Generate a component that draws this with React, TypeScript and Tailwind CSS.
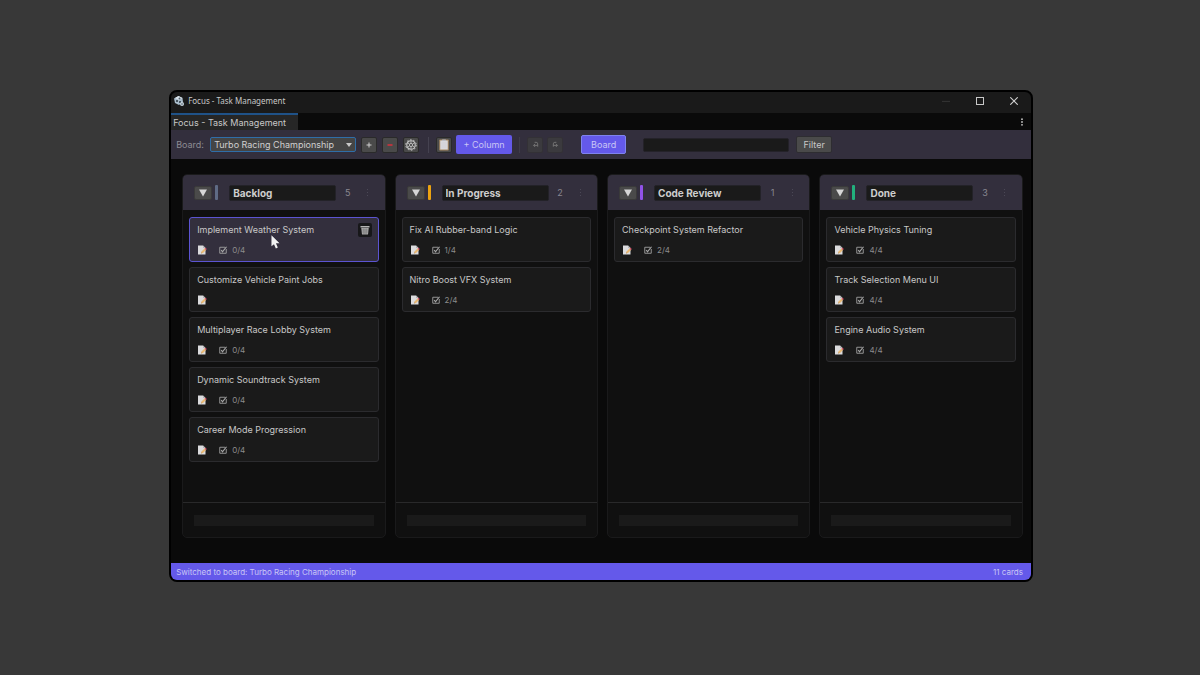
import React, { useState } from "react";

type Card = { id: number; title: string; checklist?: string };

type Column = {
  id: string;
  name: string;
  accent: string;
  cards: Card[];
};

const columns: Column[] = [
  {
    id: "backlog",
    name: "Backlog",
    accent: "bg-[#5f6b85]",
    cards: [
      { id: 1, title: "Implement Weather System", checklist: "0/4" },
      { id: 2, title: "Customize Vehicle Paint Jobs" },
      { id: 3, title: "Multiplayer Race Lobby System", checklist: "0/4" },
      { id: 4, title: "Dynamic Soundtrack System", checklist: "0/4" },
      { id: 5, title: "Career Mode Progression", checklist: "0/4" },
    ],
  },
  {
    id: "progress",
    name: "In Progress",
    accent: "bg-[#eba310]",
    cards: [
      { id: 6, title: "Fix AI Rubber-band Logic", checklist: "1/4" },
      { id: 7, title: "Nitro Boost VFX System", checklist: "2/4" },
    ],
  },
  {
    id: "review",
    name: "Code Review",
    accent: "bg-[#9152e8]",
    cards: [{ id: 8, title: "Checkpoint System Refactor", checklist: "2/4" }],
  },
  {
    id: "done",
    name: "Done",
    accent: "bg-[#22b07d]",
    cards: [
      { id: 9, title: "Vehicle Physics Tuning", checklist: "4/4" },
      { id: 10, title: "Track Selection Menu UI", checklist: "4/4" },
      { id: 11, title: "Engine Audio System", checklist: "4/4" },
    ],
  },
];

function AppIcon() {
  return (
    <svg viewBox="0 0 20 20" className="size-[10px] shrink-0">
      <path d="M9 0l8 4 1 8-8 6-8-4L0 5z" fill="#a9bccb" />
      <path d="M9 0l8 4-7 4-8-4z" fill="#dbe5ec" />
      <circle cx="6" cy="10" r="2" fill="#27333d" />
      <circle cx="11" cy="5" r="2" fill="#53626e" />
      <circle cx="12" cy="12" r="2" fill="#27333d" />
      <circle cx="16" cy="16" r="4" fill="#c9d6df" />
      <circle cx="16" cy="16" r="1.5" fill="#3b4955" />
    </svg>
  );
}

function GearIcon() {
  return (
    <svg viewBox="0 0 24 24" className="size-3 shrink-0" fill="none" stroke="#c4c4c4">
      <circle cx="12" cy="12" r="8.5" strokeWidth="2.2" />
      <circle cx="12" cy="12" r="3.2" strokeWidth="1.8" />
      <path
        d="M12 3.500v5.300M12 15.200v5.300M4.600 7.700l4.700 2.700M14.700 13.600l4.700 2.700M4.600 16.300l4.700-2.700M14.700 10.400l4.700-2.700"
        strokeWidth="1.600"
      />
      <circle cx="12" cy="12" r="10.5" strokeWidth="2" strokeDasharray="3.300 3.300" />
    </svg>
  );
}

function ClipboardIcon() {
  return (
    <svg viewBox="0 0 20 24" className="h-3 w-[10px] shrink-0">
      <rect x="0.500" y="1" width="19" height="22" rx="1.500" fill="#a98a63" />
      <rect x="2.500" y="3" width="15" height="18" fill="#d9d9dc" />
      <rect x="6" y="1" width="8" height="3" rx="1" fill="#b9bcc2" />
      <path d="M5 8h10M5 12h10M5 16h10" stroke="#c9cbd0" strokeWidth="1" />
    </svg>
  );
}

function NoteIcon() {
  return (
    <svg viewBox="0 0 20 20" className="size-[10px] shrink-0">
      <path d="M2 1h10l5 5v13H2z" fill="#dcdcde" />
      <path d="M12 1v5h5z" fill="#b4b4b8" />
      <path d="M8 17l1-4 6-6 3 3-6 6z" fill="#e8b872" />
      <path d="M15 7l2-1.500 2.500 2.500L18 10z" fill="#d9516b" />
      <path d="M8 17l1-2.500 1.500 1.500z" fill="#a88a62" />
    </svg>
  );
}

function CheckIcon() {
  return (
    <svg viewBox="0 0 16 16" className="size-2 shrink-0" fill="none" stroke="#a8a8a8">
      <path d="M14.500 6v8.500h-13v-12H12" strokeWidth="1.700" />
      <path d="M4.500 8l2.500 3.500L15 1.500" strokeWidth="2.400" />
    </svg>
  );
}

function TrashIcon() {
  return (
    <svg viewBox="0 0 20 20" className="size-[10px] shrink-0">
      <path d="M1 2h18v3H1z" fill="#b5b5b5" />
      <path d="M2.500 6h15L16 19H4z" fill="#a6a6a6" />
      <path d="M7 7l.5 11M13 7l-.5 11M10 7v11M3.500 10h13M4 14h12" stroke="#747474" strokeWidth="1" />
    </svg>
  );
}

function UndoIcon({ flip }: { flip?: boolean }) {
  return (
    <svg
      viewBox="0 0 16 16"
      className={flip ? "size-[7px] -scale-x-100" : "size-[7px]"}
      fill="none"
      stroke="#7b7b7b"
      strokeWidth="2"
    >
      <path d="M6 3h3.500a3.500 3.500 0 0 1 3.500 3.500V13" />
      <path d="M12.500 10H4M7 6.500L3.500 10 7 13.500" />
    </svg>
  );
}

function TitleBar() {
  return (
    <header className="flex h-[21px] items-center bg-[#1a1a1a] pb-1 pl-[3px] text-[8px] text-[#c8c8c8]">
      <AppIcon />
      <span className="ml-1 flex-1 font-['Noto_Sans',sans-serif]">
        Focus - Task Management
      </span>
      <button aria-label="Minimize" className="flex w-[33px] justify-center">
        <svg viewBox="0 0 10 10" className="size-2" stroke="#3c3c3c">
          <path d="M0 5.500h10" />
        </svg>
      </button>
      <button aria-label="Maximize" className="flex w-[34px] justify-center">
        <svg viewBox="0 0 8 8" className="size-2" fill="none" stroke="#c8c8c8">
          <rect x="0.500" y="0.500" width="7" height="7" />
        </svg>
      </button>
      <button aria-label="Close" className="flex w-[34px] justify-center">
        <svg viewBox="0 0 8 8" className="size-2" stroke="#d0d0d0">
          <path d="M0.300 0.300l7.400 7.400M7.700 0.300l-7.400 7.400" strokeWidth="1.100" />
        </svg>
      </button>
    </header>
  );
}

function ToolButton({
  label,
  disabled,
  children,
}: {
  label: string;
  disabled?: boolean;
  children: React.ReactNode;
}) {
  return (
    <button
      aria-label={label}
      disabled={disabled}
      className="flex size-4 shrink-0 items-center justify-center rounded-xs border border-[#2a2a2a] bg-[#4a4a4a] disabled:border-[#333136] disabled:bg-[#3b3a3e]"
    >
      {children}
    </button>
  );
}

function Toolbar() {
  const [search, setSearch] = useState("");

  return (
    <div className="flex h-[29px] items-center bg-[#332f3d] pl-[5px] text-[9px] text-[#c8c8c8]">
      <label htmlFor="board" className="w-[34px] shrink-0 text-[#8d8b93]">
        Board:
      </label>
      <div className="flex items-center gap-[5px]">
        <div className="relative">
          <select
            id="board"
            className="block h-[15px] w-[146px] appearance-none rounded-xs border border-[#2f6ea8] bg-[#454545] pl-[3px] leading-[13px] text-[#d0d0d0]"
          >
            <option>Turbo Racing Championship</option>
          </select>
          <svg
            viewBox="0 0 6 4"
            className="pointer-events-none absolute right-1 top-1/2 h-1 w-[6px] -translate-y-1/2"
            fill="#c8c8c8"
          >
            <path d="M0 0h6L3 4z" />
          </svg>
        </div>
        <ToolButton label="Add board">
          <svg viewBox="0 0 6 6" className="size-[6px]" stroke="#d0d0d0">
            <path d="M3 0.500v5M0.500 3h5" strokeWidth="1" />
          </svg>
        </ToolButton>
        <ToolButton label="Remove board">
          <svg viewBox="0 0 6 6" className="size-[6px]" stroke="#d8303c">
            <path d="M0.500 3h5" strokeWidth="1.400" />
          </svg>
        </ToolButton>
        <ToolButton label="Board settings">
          <GearIcon />
        </ToolButton>
      </div>
      <span className="ml-[9px] mr-[7px] h-4 w-px bg-[#454250]" />
      <div className="flex items-center gap-1">
        <ToolButton label="Templates">
          <ClipboardIcon />
        </ToolButton>
        <button className="h-[19px] w-14 rounded-xs bg-[#6459ea] text-[#c9c6f5]">+ Column</button>
      </div>
      <span className="mx-[7px] h-4 w-px bg-[#3f3c4a]" />
      <div className="flex items-center gap-1">
        <ToolButton label="Undo" disabled>
          <UndoIcon />
        </ToolButton>
        <ToolButton label="Redo" disabled>
          <UndoIcon flip />
        </ToolButton>
      </div>
      <button className="ml-[18px] h-[19px] w-[45px] rounded-xs border border-[#7f83ee] bg-[#6459ea] text-[#c9c6f5]">
        Board
      </button>
      <input
        aria-label="Search cards"
        value={search}
        onChange={(e) => setSearch(e.target.value)}
        className="ml-[17px] h-[14px] w-[146px] rounded-xs border border-[#242229] bg-[#1a1a1a] px-1 outline-none"
      />
      <button className="ml-[7px] h-[17px] w-9 rounded-xs border border-[#2e2d31] bg-[#4a4a4a]">
        Filter
      </button>
    </div>
  );
}

function TaskCard({ card, active }: { card: Card; active: boolean }) {
  return (
    <article
      className={`relative flex h-[45px] flex-col rounded-[3px] border px-[7px] pt-[6px] ${
        active ? "border-[#5c54d2] bg-[#332f3d]" : "border-[#2b2b2e] bg-[#1a1a1a]"
      }`}
    >
      <h3 className="text-[9px] leading-3 text-[#c8c8c8]">{card.title}</h3>
      <div className="mt-2 flex h-3 items-center text-[8px] text-[#8c8c8c]">
        <NoteIcon />
        {card.checklist && (
          <>
            <span className="ml-3 mr-[5px]">
              <CheckIcon />
            </span>
            {card.checklist}
          </>
        )}
      </div>

      {/* Hover state: delete button and pointer */}
      {active && (
        <>
          <button
            aria-label="Delete card"
            className="absolute right-[6px] top-[5px] flex size-[14px] items-center justify-center rounded-xs bg-[#171719]"
          >
            <TrashIcon />
          </button>
          <svg
            viewBox="0 0 16 26"
            className="absolute left-[81px] top-[17px] h-[14px] w-[9px]"
            fill="#f2f2f2"
          >
            <path d="M0.500 0.500v20.500l4.700-4 3.500 8 3.600-1.600-3.500-7.900 6.700-.3z" />
          </svg>
        </>
      )}
    </article>
  );
}

function BoardColumn({ column }: { column: Column }) {
  const [name, setName] = useState(column.name);

  return (
    <section className="flex min-w-0 flex-1 flex-col overflow-hidden rounded-[5px] border border-[#1a1a1b] bg-[#101010]">
      <div className="flex h-[35px] items-center bg-[#332f3d] pl-[11px]">
        <button
          aria-label="Collapse column"
          className="flex h-[14px] w-[18px] shrink-0 items-center justify-center rounded-xs border border-[#3a3a3a] bg-[#4a4a4a]"
        >
          <svg viewBox="0 0 8 8" className="size-2" fill="#d6d6d6">
            <path d="M0 0.500h8L4 7.500z" />
          </svg>
        </button>
        <span className={`ml-[3px] h-[15px] w-[3px] shrink-0 rounded-[1px] ${column.accent}`} />
        <input
          aria-label="Column name"
          value={name}
          onChange={(e) => setName(e.target.value)}
          className="ml-[11px] h-4 w-[107px] rounded-xs border border-[#232228] bg-[#1a1a1a] px-[3px] text-[10px] font-bold text-[#cdcdcd] outline-none"
        />
        <span className="w-[23px] shrink-0 text-center text-[9px] text-[#8a8891]">
          {column.cards.length}
        </span>
        <button aria-label="Column menu" className="ml-2">
          <svg viewBox="0 0 2 8" className="h-2 w-[2px]" fill="#4b4856">
            <path d="M0 0h1v1H0zM0 3h1v1H0zM0 6h1v1H0z" />
          </svg>
        </button>
      </div>

      <div className="flex flex-1 flex-col gap-[5px] px-[6px] pb-10 pt-[7px]">
        {column.cards.map((card) => (
          <TaskCard key={card.id} card={card} active={card.id === 1} />
        ))}
      </div>

      <div className="border-t border-[#29292a] px-[11px] pb-[11px] pt-3">
        <input
          aria-label="New card"
          className="block h-[11px] w-full bg-[#1a1a1a] px-1 text-[8px] outline-none"
        />
      </div>
    </section>
  );
}

function App() {
  const total = columns.reduce((sum, c) => sum + c.cards.length, 0);

  return (
    <div className="flex min-h-screen items-center justify-center bg-[#383838] pb-[3px] pl-[2px] font-[Inter,sans-serif]">
      <main className="w-[72.1%] overflow-hidden rounded-[8px] border-2 border-black bg-[#0a0a0a]">
        <TitleBar />
        <nav className="flex h-[17px] items-stretch justify-between">
          <a
            href="#board"
            className="flex w-[127px] items-center border-t-2 border-[#1f5288] bg-[#262626] pl-[2px] text-[9px] text-[#c8c8c8]"
          >
            Focus - Task Management
          </a>
          <button aria-label="Window menu" className="w-4 pr-px">
            <svg viewBox="0 0 4 10" className="mx-auto h-2 w-1" fill="#c8c8c8">
              <circle cx="2" cy="1.500" r="1.100" />
              <circle cx="2" cy="5" r="1.100" />
              <circle cx="2" cy="8.500" r="1.100" />
            </svg>
          </button>
        </nav>
        <Toolbar />

        <div className="flex min-h-[404px] gap-[9px] pb-[25px] pl-[11px] pr-2 pt-[15px]">
          {columns.map((column) => (
            <BoardColumn key={column.id} column={column} />
          ))}
        </div>

        <footer className="flex h-[17px] items-center justify-between bg-[#6459ea] pl-[5px] pr-2 text-[8px] text-[#c9c6f5]">
          <span>Switched to board: Turbo Racing Championship</span>
          <span>{total} cards</span>
        </footer>
      </main>
    </div>
  );
}

export default App;
